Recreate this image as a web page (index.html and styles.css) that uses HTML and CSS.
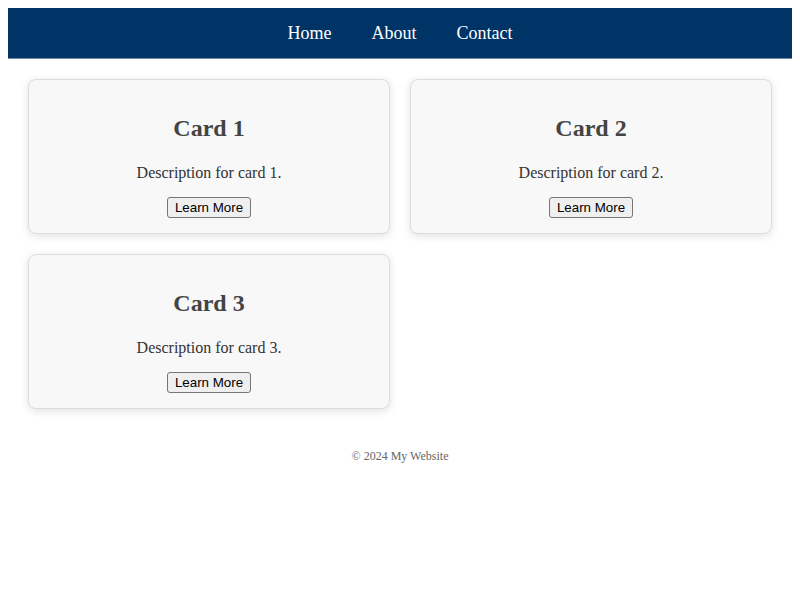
FILE: index.html
```html
<!DOCTYPE html>
<html>
<head>
<meta charset="utf-8">
<link rel="stylesheet" href="styles.css">
</head>
<body>
<header class="site-header">
  <nav class="nav">
    <a href="#" class="nav-link">Home</a>
    <a href="#" class="nav-link">About</a>
    <a href="#" class="nav-link">Contact</a>
  </nav>
</header>
<main class="cards">
  <div class="card">
    <h2 class="card-title">Card 1</h2>
    <p class="card-text">Description for card 1.</p>
    <button class="card-btn">Learn More</button>
  </div>
  <div class="card">
    <h2 class="card-title">Card 2</h2>
    <p class="card-text">Description for card 2.</p>
    <button class="card-btn">Learn More</button>
  </div>
  <div class="card">
    <h2 class="card-title">Card 3</h2>
    <p class="card-text">Description for card 3.</p>
    <button class="card-btn">Learn More</button>
  </div>
</main>
<footer class="site-footer">© 2024 My Website</footer>
</body>
</html>
```

FILE: styles.css
```css
body {
  margin: 8px;
  font-family: "Liberation Serif", "Times New Roman", serif;
  color: #333;
  background: #fff;
}

.site-header {
  background: #003366;
  height: 50px;
  border-bottom: 1px solid #6f8aa6;
  display: flex;
  align-items: center;
  justify-content: center;
}

.nav {
  display: flex;
  gap: 40px;
}

.nav-link {
  color: #fff;
  text-decoration: none;
  font-size: 18px;
  line-height: 20px;
}

.cards {
  display: grid;
  grid-template-columns: 1fr 1fr;
  gap: 20px;
  padding: 20px;
}

.card {
  background: #f8f8f8;
  border: 1px solid #ddd;
  border-radius: 8px;
  box-shadow: 0 2px 8px rgba(0, 0, 0, 0.12);
  padding: 15px;
  text-align: center;
  height: 155px;
  box-sizing: border-box;
}

.card-title {
  font-size: 24px;
  color: #444;
  margin: 20px 0 22px;
}

.card-text {
  font-size: 16px;
  color: #333;
  margin: 0 0 15px;
}

.card-btn {
  font-family: "Liberation Sans", Arial, sans-serif;
  font-size: 13.33px;
  color: #000;
  background: #efefef;
  border: 1px solid #767676;
  border-radius: 3px;
  padding: 1px 7px;
  height: 21px;
  line-height: 17px;
}

.site-footer {
  text-align: center;
  font-size: 12px;
  color: #666;
  padding: 0 20px 20px;
  line-height: 14px;
  margin-top: 20px;
}
```
